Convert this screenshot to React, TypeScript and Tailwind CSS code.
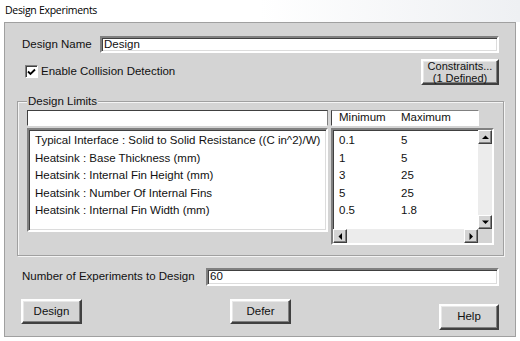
import React from "react";

const sunken =
  "border-2 border-t-[#808080] border-l-[#808080] border-r-white border-b-white shadow-[inset_1px_1px_0_#404040,inset_-1px_-1px_0_#dcdcdc]";
const raised =
  "border-2 border-t-white border-l-white border-r-[#404040] border-b-[#404040] shadow-[inset_-1px_-1px_0_#808080,inset_1px_1px_0_#e8e8e8]";

function Btn({ children, className = "" }: { children: React.ReactNode; className?: string }) {
  return (
    <div className={`${raised} bg-[#d4d4d4] flex items-center justify-center text-[#111] ${className}`}>
      {children}
    </div>
  );
}

function Tri({ dir }: { dir: "up" | "down" | "left" | "right" }) {
  const pts: Record<string, string> = {
    up: "0,4 3.5,0.5 7,4",
    down: "0,0.5 3.5,4 7,0.5",
    left: "4,0 0.5,3.5 4,7",
    right: "0.5,0 4,3.5 0.5,7",
  };
  const vertical = dir === "up" || dir === "down";
  return (
    <svg width={vertical ? 7 : 5} height={vertical ? 5 : 7} viewBox={vertical ? "0 0 7 5" : "0 0 5 7"}>
      <polygon points={pts[dir]} fill="#000" />
    </svg>
  );
}

function ScrollBtn({ dir }: { dir: "up" | "down" | "left" | "right" }) {
  return (
    <div className="w-[14px] h-[14px] shrink-0 bg-[#d4d4d4] border border-t-white border-l-white border-r-[#404040] border-b-[#404040] shadow-[inset_-1px_-1px_0_#808080] flex items-center justify-center">
      <Tri dir={dir} />
    </div>
  );
}

const rows = [
  ["Typical Interface : Solid to Solid Resistance ((C in^2)/W)", "0.1", "5"],
  ["Heatsink : Base Thickness (mm)", "1", "5"],
  ["Heatsink : Internal Fin Height (mm)", "3", "25"],
  ["Heatsink : Number Of Internal Fins", "5", "25"],
  ["Heatsink : Internal Fin Width (mm)", "0.5", "1.8"],
];

export default function App() {
  return (
    <div className="w-[520px] h-[341px] overflow-hidden bg-white text-[#111] font-['Liberation_Sans',Arial,sans-serif] text-[11.5px]">
      <div className="h-[22px] flex items-center pl-[5px] bg-gradient-to-r from-white via-white to-[#eef0f3] font-['Open_Sans',sans-serif] text-[10.5px] tracking-[-0.3px] text-black">
        Design Experiments
      </div>
      <div className="ml-[4px] w-[512px] h-[315px] bg-[#d4d4d4] border border-[#a0a0a0] flex flex-col">
        {/* Design name row */}
        <div className="mt-[13px] flex items-center h-[17px]">
          <div className="w-[95px] pl-[17px] leading-none">Design Name</div>
          <div className={`${sunken} bg-white w-[399px] h-[17px] flex items-center pl-[2px] leading-none`}>Design</div>
        </div>
        {/* checkbox row */}
        <div className="mt-[6px] flex h-[26px]">
          <div className="flex items-center pl-[20px] w-[416px] mt-[-1px]">
            <div className="w-[13px] h-[13px] bg-white border border-t-[#808080] border-l-[#808080] border-r-white border-b-white shadow-[inset_1px_1px_0_#404040] flex items-center justify-center">
              <svg width="9" height="8" viewBox="0 0 9 8">
                <path d="M1 3.5 L3.5 6 L8 1.5" stroke="#000" strokeWidth="1.8" fill="none" />
              </svg>
            </div>
            <span className="ml-[3px]">Enable Collision Detection</span>
          </div>
          <Btn className="w-[78px] h-[26px] flex-col text-[11px] leading-[12px]">
            <span>Constraints...</span>
            <span>(1 Defined)</span>
          </Btn>
        </div>
        {/* group box */}
        <div className="relative mt-[16px] ml-[12px] w-[487px] h-[155px] border border-[#a0a0a0] shadow-[inset_1px_1px_0_#f4f4f4,1px_1px_0_#f4f4f4]">
          <span className="absolute left-[9px] top-[-8px] bg-[#d4d4d4] px-[1px] leading-[14px]">Design Limits</span>
          <div className="mt-[8px] ml-[9px] flex gap-[3px]">
            <div className="flex flex-col gap-[2px]">
              <div className="w-[301px] h-[16px] bg-white border border-t-[#404040] border-l-[#404040] border-r-[#808080] border-b-white" />
              <div className={`${sunken} bg-white w-[301px] h-[104px] pt-[2px] pl-[6px] leading-[17.5px] whitespace-nowrap overflow-hidden`}>
                {rows.map((r) => (
                  <div key={r[0]}>{r[0]}</div>
                ))}
              </div>
            </div>
            <div className="flex flex-col gap-[2px]">
              <div className="w-[148px] h-[16px] bg-white border border-t-[#808080] border-l-[#404040] border-r-white border-b-white flex items-center leading-none">
                <span className="ml-[7px] w-[62px]">Minimum</span>
                <span>Maximum</span>
              </div>
              <div className={`${sunken} bg-white w-[163px] h-[117px] flex flex-col`}>
                <div className="flex flex-1 min-h-0">
                  <div className="flex-1 pt-[2px] leading-[17.5px]">
                    {rows.map((r) => (
                      <div key={r[0]} className="flex">
                        <span className="ml-[6px] w-[62px]">{r[1]}</span>
                        <span>{r[2]}</span>
                      </div>
                    ))}
                  </div>
                  <div className="w-[14px] flex flex-col bg-[#ececec]">
                    <ScrollBtn dir="up" />
                    <div className="flex-1" />
                    <ScrollBtn dir="down" />
                  </div>
                </div>
                <div className="h-[14px] flex bg-[#ececec]">
                  <ScrollBtn dir="left" />
                  <div className="flex-1" />
                  <ScrollBtn dir="right" />
                  <div className="w-[14px] bg-[#d4d4d4]" />
                </div>
              </div>
            </div>
          </div>
        </div>
        {/* number row */}
        <div className="mt-[12px] flex items-center h-[18px]">
          <div className="w-[201px] pl-[17px] leading-none">Number of Experiments to Design</div>
          <div className={`${sunken} bg-white w-[293px] h-[18px] flex items-center pl-[2px] leading-none`}>60</div>
        </div>
        {/* buttons */}
        <div className="mt-[13px] flex items-start">
          <Btn className="ml-[16px] w-[61px] h-[25px]">Design</Btn>
          <Btn className="ml-[148px] w-[61px] h-[25px]">Defer</Btn>
          <Btn className="ml-[148px] mt-[5px] w-[60px] h-[26px]">Help</Btn>
        </div>
      </div>
    </div>
  );
}
